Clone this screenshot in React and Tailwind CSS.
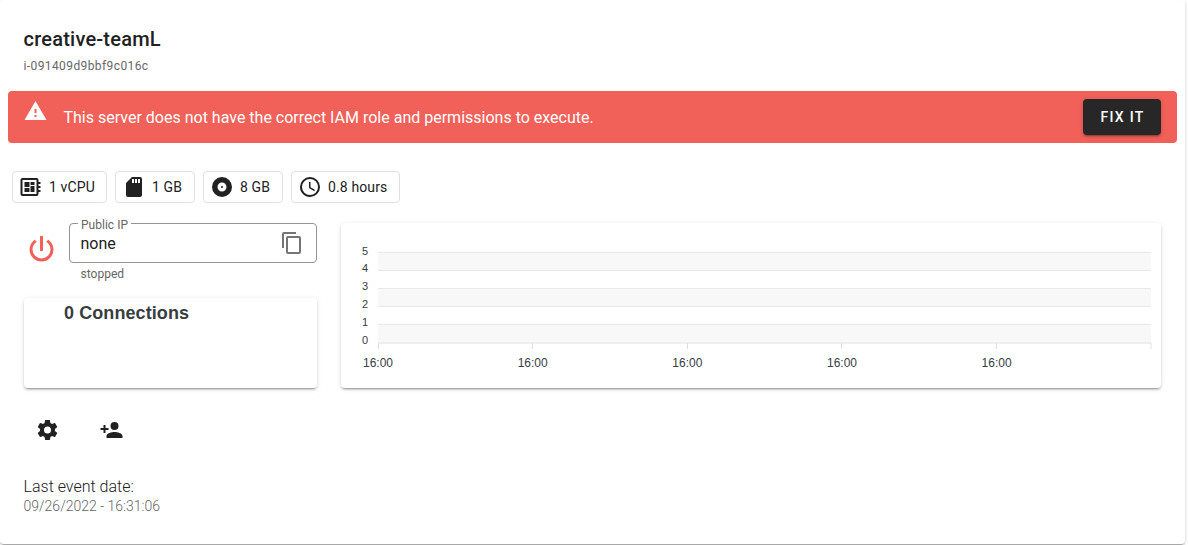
const ICONS = {
  alert: 'M13,14H11V10H13M13,18H11V16H13M1,21H23L12,2L1,21Z',
  board:
    'M22,9V7H20V5A2,2 0 0,0 18,3H4A2,2 0 0,0 2,5V19A2,2 0 0,0 4,21H18A2,2 0 0,0 20,19V17H22V15H20V13H22V11H20V9H22M18,19H4V5H18V19M6,13H11V17H6V13M12,7H16V10H12V7M6,7H11V12H6V7M12,11H16V17H12V11Z',
  sd: 'M18,8H16V4H18M15,8H13V4H15M12,8H10V4H12M18,2H10L4,8V20A2,2 0 0,0 6,22H18A2,2 0 0,0 20,20V4A2,2 0 0,0 18,2Z',
  disc: 'M12,11A1,1 0 0,0 11,12A1,1 0 0,0 12,13A1,1 0 0,0 13,12A1,1 0 0,0 12,11M12,16.5C9.5,16.5 7.5,14.5 7.5,12C7.5,9.5 9.5,7.5 12,7.5C14.5,7.5 16.5,9.5 16.5,12C16.5,14.5 14.5,16.5 12,16.5M12,2A10,10 0 0,0 2,12A10,10 0 0,0 12,22A10,10 0 0,0 22,12A10,10 0 0,0 12,2Z',
  clock:
    'M12,20A8,8 0 0,0 20,12A8,8 0 0,0 12,4A8,8 0 0,0 4,12A8,8 0 0,0 12,20M12,2A10,10 0 0,1 22,12A10,10 0 0,1 12,22C6.47,22 2,17.5 2,12A10,10 0 0,1 12,2M12.5,7V12.25L17,14.92L16.25,16.15L11,13V7H12.5Z',
  power:
    'M16.56,5.44L15.11,6.89C16.84,7.94 18,9.83 18,12A6,6 0 0,1 12,18A6,6 0 0,1 6,12C6,9.83 7.16,7.94 8.88,6.88L7.44,5.44C5.36,6.88 4,9.28 4,12A8,8 0 0,0 12,20A8,8 0 0,0 20,12C20,9.28 18.64,6.88 16.56,5.44M13,3H11V13H13',
  copy: 'M19,21H8V7H19M19,5H8A2,2 0 0,0 6,7V21A2,2 0 0,0 8,23H19A2,2 0 0,0 21,21V7A2,2 0 0,0 19,5M16,1H4A2,2 0 0,0 2,3V17H4V3H16V1Z',
  cog: 'M12,15.5A3.5,3.5 0 0,1 8.5,12A3.5,3.5 0 0,1 12,8.5A3.5,3.5 0 0,1 15.5,12A3.5,3.5 0 0,1 12,15.5M19.43,12.97C19.47,12.65 19.5,12.33 19.5,12C19.5,11.67 19.47,11.34 19.43,11L21.54,9.37C21.73,9.22 21.78,8.95 21.66,8.73L19.66,5.27C19.54,5.05 19.27,4.96 19.05,5.05L16.56,6.05C16.04,5.66 15.5,5.32 14.87,5.07L14.5,2.42C14.46,2.18 14.25,2 14,2H10C9.75,2 9.54,2.18 9.5,2.42L9.13,5.07C8.5,5.32 7.96,5.66 7.44,6.05L4.95,5.05C4.73,4.96 4.46,5.05 4.34,5.27L2.34,8.73C2.21,8.95 2.27,9.22 2.46,9.37L4.57,11C4.53,11.34 4.5,11.67 4.5,12C4.5,12.33 4.53,12.65 4.57,12.97L2.46,14.63C2.27,14.78 2.21,15.05 2.34,15.27L4.34,18.73C4.46,18.95 4.73,19.03 4.95,18.95L7.44,17.94C7.96,18.34 8.5,18.68 9.13,18.93L9.5,21.58C9.54,21.82 9.75,22 10,22H14C14.25,22 14.46,21.82 14.5,21.58L14.87,18.93C15.5,18.67 16.04,18.34 16.56,17.94L19.05,18.95C19.27,19.03 19.54,18.95 19.66,18.73L21.66,15.27C21.78,15.05 21.73,14.78 21.54,14.63L19.43,12.97Z',
  addUser:
    'M15,14C12.33,14 7,15.33 7,18V20H23V18C23,15.33 17.67,14 15,14M6,10V7H4V10H1V12H4V15H6V12H9V10M15,12A4,4 0 0,0 19,8A4,4 0 0,0 15,4A4,4 0 0,0 11,8A4,4 0 0,0 15,12Z',
};

function Icon({ name, className = 'size-6', viewBox = '0 0 24 24' }) {
  return (
    <svg viewBox={viewBox} fill="currentColor" className={`shrink-0 ${className}`} aria-hidden="true">
      <path d={ICONS[name]} />
    </svg>
  );
}

function Chip({ icon, label, width, viewBox }) {
  return (
    <div className={`flex h-8 items-center gap-1.5 rounded border border-[#e0e0e0] pl-1.5 text-sm ${width}`}>
      <Icon name={icon} viewBox={viewBox} />
      <span className="whitespace-nowrap tracking-[0.12px]">{label}</span>
    </div>
  );
}

const CARD =
  'rounded bg-white shadow-[0_3px_1px_-2px_rgba(0,0,0,0.2),0_2px_2px_0_rgba(0,0,0,0.14),0_1px_5px_0_rgba(0,0,0,0.12)]';

function Chart() {
  const lines = [252.5, 270.5, 288.5, 306.5, 324.5];
  const ticks = [378.5, 532.5, 687.5, 841.5, 996.5];
  const labels = [255, 272, 290, 308, 326, 344];
  return (
    <svg viewBox="341 223 820 165" className="block h-[165px] w-[820px]">
      {[252, 288, 324].map((y) => (
        <rect key={y} x="378" y={y} width="773" height="18.5" fill="#f8f8f8" />
      ))}
      {lines.map((y) => (
        <line key={y} x1="378" x2="1151" y1={y} y2={y} stroke="#e8e8e8" />
      ))}
      <line x1="378" x2="1151" y1="343" y2="343" stroke="#e0e0e0" />
      {[...ticks, 1151].map((x) => (
        <line key={x} x1={x} x2={x} y1="343" y2="349" stroke="#e0e0e0" />
      ))}
      <g fill="#373d3f" fontFamily="'Liberation Sans', Arial, sans-serif">
        {labels.map((y, i) => (
          <text key={y} x="368" y={y} textAnchor="end" fontSize="11">
            {5 - i}
          </text>
        ))}
        {[378, 532.7, 687.3, 842, 996.6].map((x) => (
          <text key={x} x={x} y="367" textAnchor="middle" fontSize="12">
            16:00
          </text>
        ))}
      </g>
    </svg>
  );
}

export default function App() {
  return (
    <div className="h-[545px] w-full overflow-hidden bg-white font-['Roboto',sans-serif] text-[#212121]">
      <main className={`h-[543.5px] w-[1185px] ${CARD}`}>
        <header className="h-[91px] pt-[23px] pl-[23.5px]">
          <h1 className="text-xl leading-8 font-medium tracking-[0.22px]">creative-teamL</h1>
          <p className="mt-px text-xs leading-5 tracking-[0.4px] text-[#666]">i-091409d9bbf9c016c</p>
        </header>

        <div className="ml-2 flex h-[52px] w-[1169px] items-center rounded bg-[#f16059] px-4 text-white">
          <Icon name="alert" className="mb-3 size-6" viewBox="0.5 0 24 24" />
          <p className="ml-[15.5px] flex-1 pt-0.5 text-base tracking-normal">
            This server does not have the correct IAM role and permissions to execute.
          </p>
          <button className="h-9 w-[78px] rounded bg-[#272727] pl-px text-sm font-medium tracking-[1.25px] shadow-[0_3px_1px_-2px_rgba(0,0,0,0.2),0_2px_2px_0_rgba(0,0,0,0.14),0_1px_5px_0_rgba(0,0,0,0.12)]">
            FIX IT
          </button>
        </div>

        <div className="mt-7 ml-3 flex gap-2">
          <Chip icon="board" label="1 vCPU" width="w-[95px]" viewBox="0.5 0 24 24" />
          <Chip icon="sd" label="1 GB" width="w-20" />
          <Chip icon="disc" label="8 GB" width="w-20" />
          <Chip icon="clock" label="0.8 hours" width="w-[109px]" />
        </div>

        <div className="mt-5 ml-6 flex gap-6">
          <section className="w-[293px]">
            <div className="flex h-[74.5px]">
              <Icon name="power" className="mt-2 size-9 text-[#f16059]" viewBox="0.33 -0.33 24 24" />
              <div className="ml-[9px] w-[248px]">
                <div className="relative flex h-10 items-center justify-between rounded border border-[#949494] pr-3 pl-[10.5px]">
                  <span className="absolute -top-[7px] left-2 bg-white px-[3px] text-xs leading-4 tracking-[0.02px] whitespace-nowrap text-[#666]">
                    Public IP
                  </span>
                  <span className="pt-0.5 text-base">none</span>
                  <Icon name="copy" className="size-6 text-[#757575]" />
                </div>
                <p className="mt-[3px] ml-[11.5px] text-xs tracking-[0.02px] text-[#666]">stopped</p>
              </div>
            </div>
            <div className={`h-[90.5px] pt-[1.5px] pl-10 ${CARD}`}>
              <h2 className="font-['Liberation_Sans',Arial,sans-serif] text-lg font-bold tracking-[0.08px] text-[#373d3f]">
                0 Connections
              </h2>
            </div>
          </section>
          <section className={`h-[165px] w-[820px] ${CARD}`}>
            <Chart />
          </section>
        </div>

        <div className="mt-[30px] ml-9 flex gap-10">
          <Icon name="cog" viewBox="0.5 0 24 24" />
          <Icon name="addUser" viewBox="0.5 0 24 24" />
        </div>

        <footer className="mt-[33px] ml-[23.5px] font-light">
          <p className="text-base leading-6">Last event date:</p>
          <p className="-mt-px text-sm leading-4 text-[#666]">09/26/2022 - 16:31:06</p>
        </footer>
      </main>
    </div>
  );
}
